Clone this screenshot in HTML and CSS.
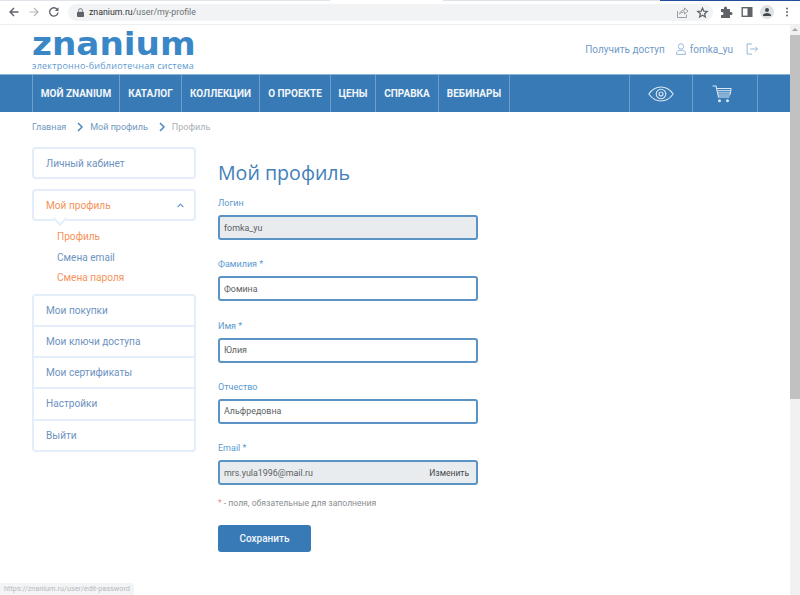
FILE: index.html
```html
<!DOCTYPE html>
<html lang="ru">
<head>
<meta charset="utf-8">
<title>Мой профиль</title>
<link rel="stylesheet" href="styles.css">
</head>
<body>
<div class="tabstrip"><span class="ts-a"></span><span class="ts-b"></span><span class="ts-c"></span><span class="ts-d"></span></div>
<div class="toolbar">
  <svg class="tb-icon" width="14" height="14" viewBox="0 0 14 14"><path d="M11.500 7H3M7 3 3 7l4 4" fill="none" stroke="#5f6368" stroke-width="1.400"/></svg>
  <svg class="tb-icon" width="14" height="14" viewBox="0 0 14 14"><path d="M2.500 7H11M7 3l4 4-4 4" fill="none" stroke="#b4b6b9" stroke-width="1.200"/></svg>
  <svg class="tb-icon" width="14" height="14" viewBox="0 0 14 14"><path d="M11 7.500A4.200 4.200 0 1 1 9.900 4" fill="none" stroke="#5f6368" stroke-width="1.400"/><path d="M11.500 2.200V6H7.800z" fill="#5f6368"/></svg>
  <div class="omnibox">
    <svg width="7" height="9" viewBox="0 0 8 10"><path d="M1.800 4V2.800a2.200 2.200 0 0 1 4.400 0V4" fill="none" stroke="#5f6368"/><rect y="4" width="8" height="6" rx="1" fill="#5f6368"/></svg>
    <span class="url"><b class="host">znanium.ru</b>/user/my-profile</span>
    <span class="omni-actions">
      <svg width="13" height="13" viewBox="0 0 13 13"><path d="M1.500 5v6.500h9V8.500" fill="none" stroke="#9a9da1"/><path d="M3.500 8c.5-2.500 2.500-4 5-4V2l3.500 3-3.500 3V6c-2 0-3.500.5-5 2z" fill="none" stroke="#9a9da1"/></svg>
      <svg width="13" height="13" viewBox="0 0 13 13"><path d="M6.500 2 7.800 5.200l3.400.3-2.600 2.200.8 3.300-2.900-1.800-2.900 1.800.8-3.300-2.600-2.200 3.400-.3z" fill="none" stroke="#5f6368" stroke-width="1.200"/></svg>
    </span>
  </div>
  <div class="tb-right">
    <svg width="12" height="12" viewBox="0 0 12 12"><path d="M0 3h3V2a1.500 1.500 0 0 1 3 0v1h3v3h1a1.500 1.500 0 0 1 0 3H9v3H0V9h1a1.500 1.500 0 0 0 0-3H0z" fill="#5f6368"/></svg>
    <svg width="12" height="12" viewBox="0 0 12 12"><rect x="1.200" y="1.700" width="9.600" height="8.600" fill="none" stroke="#5f6368" stroke-width="1.400"/><rect x="6.500" y="1.700" width="4.500" height="8.600" fill="#5f6368"/></svg>
    <span class="avatar"><svg width="10" height="10" viewBox="0 0 10 10"><circle cx="5" cy="3" r="2" fill="#44474a"/><path d="M1 9V8c0-1 2.200-2 4-2s4 1 4 2v1z" fill="#44474a"/></svg></span>
    <svg class="dots" width="4" height="12" viewBox="0 0 4 12"><circle cx="2" cy="2.500" r="1" fill="#5f6368"/><circle cx="2" cy="6" r="1" fill="#5f6368"/><circle cx="2" cy="9.500" r="1" fill="#5f6368"/></svg>
  </div>
</div>

<div class="viewport">
  <div class="page">
    <header class="header">
      <a class="logo">
        <span class="logo-name">znanium</span>
        <span class="logo-sub">электронно-библиотечная система</span>
      </a>
      <div class="user-links">
        <a class="link">Получить доступ</a>
        <a class="link user">
          <svg width="10" height="12" viewBox="0 0 11 13"><circle cx="5.500" cy="3.700" r="3" fill="none" stroke="#8db2d8"/><path d="M.6 12.400V11c0-2 1.900-3.200 4.900-3.200s4.900 1.200 4.900 3.200v1.400z" fill="none" stroke="#8db2d8"/></svg>
          fomka_yu
        </a>
        <svg class="logout" width="12" height="12" viewBox="0 0 13 13"><path d="M6.500 1H1.200v11h5.300" fill="none" stroke="#8db2d8"/><path d="M4.500 6.500h8M10 4l2.500 2.500L10 9" fill="none" stroke="#8db2d8"/></svg>
      </div>
    </header>

    <nav class="nav">
      <a class="nav-item w1">МОЙ ZNANIUM</a>
      <a class="nav-item w2">КАТАЛОГ</a>
      <a class="nav-item w3">КОЛЛЕКЦИИ</a>
      <a class="nav-item w4">О ПРОЕКТЕ</a>
      <a class="nav-item w5">ЦЕНЫ</a>
      <a class="nav-item w6">СПРАВКА</a>
      <a class="nav-item w7">ВЕБИНАРЫ</a>
      <span class="nav-spacer"></span>
      <a class="nav-item nav-icon w8">
        <svg width="26" height="16" viewBox="0 0 26 16"><path d="M.8 8C4 3.500 8.200 1 13 1s9 2.500 12.200 7C22 12.500 17.800 15 13 15S4 12.500.8 8z" fill="none" stroke="#dce8f3" stroke-width="1.100"/><circle cx="13" cy="8" r="4.800" fill="none" stroke="#dce8f3" stroke-width="1.100"/><circle cx="13" cy="8" r="2" fill="none" stroke="#dce8f3" stroke-width="1.100"/></svg>
      </a>
      <a class="nav-item nav-icon w9">
        <svg class="cart" width="20" height="18" viewBox="0 0 20 18"><path d="M.5 1H4l2.500 11h11" fill="none" stroke="#dce8f3" stroke-width="1.100"/><path d="M4.800 3.500h14.400l-1.200 6.500H6.200M5.300 5.700h13.500M5.800 7.900h12.800" fill="none" stroke="#dce8f3"/><circle cx="7.500" cy="15.800" r="1.500" fill="#dce8f3"/><circle cx="15.500" cy="15.800" r="1.500" fill="#dce8f3"/></svg>
      </a>
      <span class="nav-end"></span>
    </nav>

    <div class="crumbs">
      <a>Главная</a>
      <svg width="6" height="10" viewBox="0 0 6 10"><path d="M1 1l4 4-4 4" fill="none" stroke="#4a86bd" stroke-width="1.500"/></svg>
      <a>Мой профиль</a>
      <svg width="6" height="10" viewBox="0 0 6 10"><path d="M1 1l4 4-4 4" fill="none" stroke="#4a86bd" stroke-width="1.500"/></svg>
      <span class="crumb-current">Профиль</span>
    </div>

    <main class="content">
      <aside class="side">
        <a class="side-box">Личный кабинет</a>
        <a class="side-box open">
          <span>Мой профиль</span>
          <svg class="chev" width="7" height="5" viewBox="0 0 7 5"><path d="M.7 4 3.500 1.200 6.300 4" fill="none" stroke="#6f9cc9" stroke-width="1.200"/></svg>
        </a>
        <ul class="sub">
          <li class="orange">Профиль</li>
          <li>Смена email</li>
          <li class="orange">Смена пароля</li>
        </ul>
        <div class="side-group">
          <a class="side-row">Мои покупки</a>
          <a class="side-row">Мои ключи доступа</a>
          <a class="side-row">Мои сертификаты</a>
          <a class="side-row">Настройки</a>
          <a class="side-row">Выйти</a>
        </div>
      </aside>

      <form class="form">
        <h1 class="title">Мой профиль</h1>
        <div class="field">
          <label class="label">Логин</label>
          <div class="input ro">fomka_yu</div>
        </div>
        <div class="field">
          <label class="label">Фамилия *</label>
          <div class="input">Фомина</div>
        </div>
        <div class="field">
          <label class="label">Имя *</label>
          <div class="input">Юлия</div>
        </div>
        <div class="field">
          <label class="label">Отчество</label>
          <div class="input">Альфредовна</div>
        </div>
        <div class="field">
          <label class="label">Email *</label>
          <div class="input ro split"><span>mrs.yula1996@mail.ru</span><a class="change">Изменить</a></div>
        </div>
        <p class="note"><span class="star">*</span> - поля, обязательные для заполнения</p>
        <button class="save" type="button">Сохранить</button>
      </form>
    </main>
  </div>
  <div class="scrollbar">
    <span class="sb-arrow"></span>
    <span class="sb-thumb"></span>
  </div>
</div>
<div class="status">https://znanium.ru/user/edit-password</div>
</body>
</html>
```

FILE: styles.css
```css
* { box-sizing: border-box; }
html, body { margin: 0; height: 595px; overflow: hidden; }
body { font-family: Roboto, "Liberation Sans", sans-serif; background: #fff; position: relative; }
a { text-decoration: none; color: inherit; }

.tabstrip { height: 1px; display: flex; }
.ts-a { width: 330px; background: #dfe3ea; }
.ts-b { width: 113px; background: #fff; }
.ts-c { width: 217px; background: #dfe1e5; }
.ts-d { flex: 1; background: #1f4f9c; }

.toolbar { height: 24px; background: #fff; border-bottom: 1px solid #eceef0; display: flex; align-items: center; padding: 0 0 1px 7px; }
.tb-icon { margin-right: 6px; flex: none; }
.omnibox { margin-left: 1px; flex: 1 1 auto; height: 17px; background: #f1f3f4; border-radius: 9px; display: flex; align-items: center; padding: 0 4px 0 21px; position: relative; }
.omnibox > svg { position: absolute; left: 9px; top: 4px; }
.url { font-size: 8.800px; color: #6d7175; }
.host { font-weight: 400; color: #303336; }
.omni-actions { margin-left: auto; display: flex; gap: 7px; }
.tb-right { display: flex; align-items: center; gap: 7.500px; padding-left: 8px; width: 87px; flex: none; }
.avatar { width: 14px; height: 14px; border-radius: 50%; background: #dee1e6; display: flex; align-items: center; justify-content: center; }
.dots { margin-left: 3px; }

.viewport { display: flex; height: 570px; }
.page { flex: 1; min-width: 0; }
.scrollbar { width: 10px; background: #f1f1f1; display: flex; flex-direction: column; align-items: stretch; padding-top: 3px; }
.sb-arrow { width: 0; height: 0; margin: 0 auto 4px; border-left: 3px solid transparent; border-right: 3px solid transparent; border-bottom: 3px solid #a3a3a3; }
.sb-thumb { height: 364px; background: #c1c1c1; }

.header { height: 49px; display: flex; justify-content: space-between; padding: 0 32px; }
.logo { display: flex; flex-direction: column; width: 162px; }
.logo-name { font-family: "DejaVu Sans", sans-serif; font-weight: 700; font-size: 32px; line-height: 31px; height: 31px; margin-top: 4px; color: #3a87c8; transform: scaleX(1.07); transform-origin: left center; }
.logo-sub { font-family: "Open Sans", sans-serif; font-size: 9px; line-height: 11px; color: #5d9bd1; white-space: nowrap; letter-spacing: .23px; }
.user-links { display: flex; align-items: center; padding-bottom: 1px; color: #6f9ac8; font-size: 10px; height: 49px; }
.link { display: flex; align-items: center; gap: 4px; margin-right: 11px; }
.link.user { margin-right: 13px; }
.logout { flex: none; }

.nav { height: 38px; background: #377ab6; border-top: 1px solid #8db4d6; display: flex; padding-left: 32px; color: #f2f6fa; }
.nav-item { border-left: 1px solid #6fa0cb; display: flex; align-items: center; justify-content: center; font-weight: 700; font-size: 10px; white-space: nowrap; flex: none; }
.w1 { width: 87px; } .w2 { width: 62px; } .w3 { width: 78px; } .w4 { width: 71px; }
.w5 { width: 45px; } .w6 { width: 63px; } .w7 { width: 71px; }
.w8 { width: 63px; } .w9 { width: 65px; }
.cart { margin-right: 6px; }
.nav-spacer { width: 120px; border-left: 1px solid #6fa0cb; flex: none; }
.nav-end { flex: 1; border-left: 1px solid #6fa0cb; }

.crumbs { height: 35px; padding: 0 0 5px 32px; display: flex; align-items: center; gap: 7px; font-size: 9px; color: #7298bf; }
.crumbs svg { margin: 0 0 0 4px; }
.crumb-current { color: #aab1b8; }

.content { display: flex; padding-left: 32px; }
.side { width: 164px; margin-right: 22px; flex: none; font-size: 10.100px; color: #6d93bf; }
.side-box { height: 32px; display: flex; align-items: center; justify-content: space-between; padding: 0 12px; border: 2px solid #e3eefa; border-radius: 4px; margin-bottom: 10px; }
.side-box.open { color: #f5935a; margin-bottom: 0; position: relative; }
.side-box.open::after { content: ""; position: absolute; left: 21px; bottom: -5px; width: 8px; height: 8px; background: #fff; border-right: 2px solid #e3eefa; border-bottom: 2px solid #e3eefa; transform: rotate(45deg); }
.chev { margin-right: -2px; }
.sub { list-style: none; margin: 0; padding: 6px 0 0 25px; height: 73px; }
.sub li { height: 20.500px; line-height: 20.500px; color: #6d93bf; }
.sub li.orange { color: #f5935a; }
.side-group { border: 2px solid #e3eefa; border-radius: 4px; }
.side-row { display: flex; align-items: center; height: 31.200px; padding: 0 12px; border-top: 2px solid #e3eefa; }
.side-row:first-child { border-top: 0; height: 29px; }

.form { width: 260px; margin-top: 12px; }
.title { margin: 0; font-family: "Open Sans", sans-serif; font-weight: 400; font-size: 19.600px; line-height: 27px; height: 37px; color: #3f80ba; }
.field + .field { margin-top: 17.250px; }
.label { display: block; height: 19px; line-height: 14px; font-size: 9px; color: #5b9ad0; }
.input { height: 25px; border: 2px solid #5b93c4; border-radius: 3px; padding: 0 4px; display: flex; align-items: center; font-size: 8.900px; color: #5c5f62; }
.input.ro { background: #e9ecef; }
.split { justify-content: space-between; }
.change { color: #46494c; padding-right: 3px; font-size: 8.500px; }
.note { margin: 11.500px 0 15.500px; font-size: 8.600px; line-height: 13px; color: #8b8f93; }
.star { color: #ef8b8b; }
.save { display: block; width: 93px; height: 27px; border: 0; border-radius: 3px; background: #377ab6; color: #f2f6fa; font-family: Roboto, sans-serif; font-size: 10px; font-weight: 500; }

.status { position: absolute; left: 0; bottom: 0; height: 12px; padding: 0 4px; background: #f2f4f5; border-radius: 0 3px 0 0; font-size: 7.300px; line-height: 12px; color: #b7babd; }
```
